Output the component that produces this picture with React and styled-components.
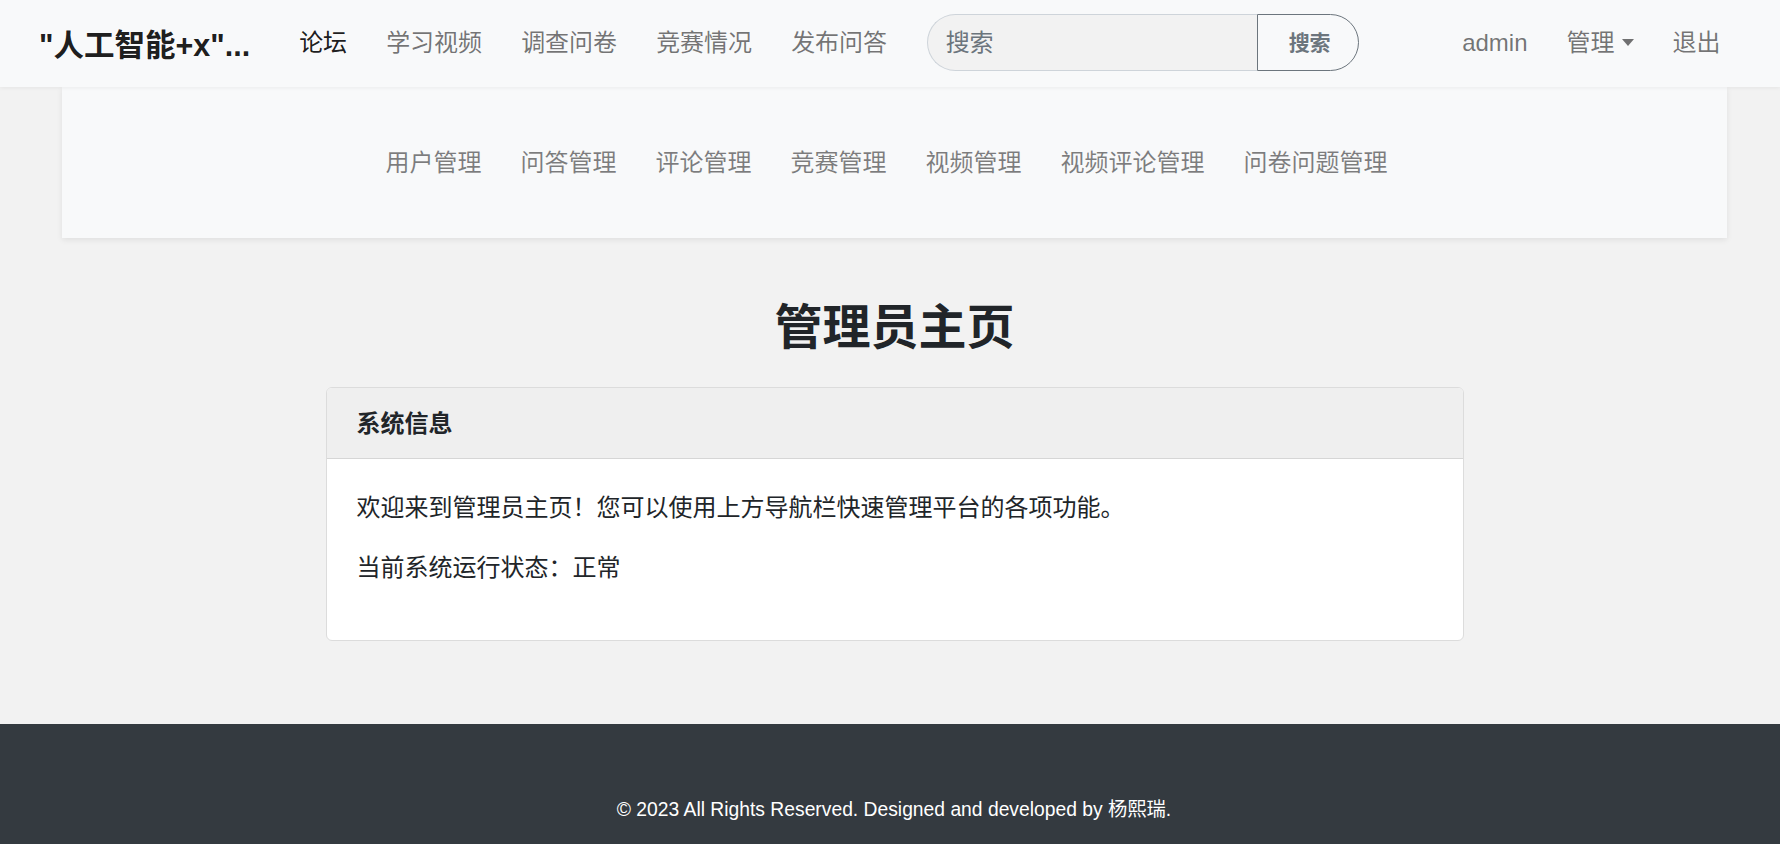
import React from "react";
import styled, { createGlobalStyle } from "styled-components";

const GlobalStyle = createGlobalStyle`
  html, body {
    margin: 0;
    padding: 0;
    background: #f2f2f2;
    font-family: "Noto Sans", "Noto Sans CJK SC", sans-serif;
    color: #212529;
  }
  * { box-sizing: border-box; }
`;

const Page = styled.div`
  min-height: 844px;
  display: flex;
  flex-direction: column;
`;

const NavBar = styled.nav`
  height: 87px;
  display: flex;
  align-items: center;
  padding: 0 40px 2px 39px;
  background: #f8f9fa;
  box-shadow: 0 1px 4px rgba(0, 0, 0, 0.06);
  position: relative;
  z-index: 2;
  font-family: "Liberation Sans", "Noto Sans CJK SC", sans-serif;
`;

const Brand = styled.a`
  font-size: 30.5px;
  font-weight: 700;
  color: rgba(0, 0, 0, 0.9);
  white-space: nowrap;
  margin-right: 29.5px;
`;

const NavList = styled.div`
  display: flex;
  align-items: center;
`;

const NavLink = styled.a`
  font-size: 24px;
  line-height: 36px;
  padding: 0 19.5px;
  color: ${(p) => (p.$active ? "rgba(0,0,0,0.9)" : "rgba(0,0,0,0.55)")};
  white-space: nowrap;
  display: flex;
  align-items: center;
`;

const Caret = styled.span`
  display: inline-block;
  margin-left: 7px;
  border-top: 7px solid rgba(0, 0, 0, 0.55);
  border-left: 6px solid transparent;
  border-right: 6px solid transparent;
`;

const SearchForm = styled.form`
  display: flex;
  height: 57px;
  margin: 0 0 0 20px;
`;

const SearchInput = styled.input`
  width: 330px;
  height: 100%;
  border: 1px solid #ced4da;
  border-right: none;
  border-radius: 29px 0 0 29px;
  background: #f2f2f2;
  padding: 1px 0 0 18px;
  font-family: inherit;
  font-size: 24px;
  color: #212529;
  outline: none;
  &::placeholder {
    color: #6c757d;
  }
`;

const SearchButton = styled.button`
  width: 102px;
  height: 100%;
  border: 1px solid #6c757d;
  border-radius: 0 29px 29px 0;
  background: transparent;
  color: #6c757d;
  font-family: inherit;
  font-size: 21px;
  font-weight: 700;
  padding: 0 0 4px 4px;
`;

const RightNav = styled(NavList)`
  margin-left: auto;
`;

const Main = styled.main`
  width: 1665px;
  margin-left: 62px;
  display: flex;
  flex-direction: column;
  align-items: center;
`;

const SubPanel = styled.div`
  align-self: stretch;
  height: 151px;
  background: #f8f9fa;
  box-shadow: 0 2px 6px rgba(0, 0, 0, 0.08);
  display: flex;
  align-items: center;
  justify-content: center;
  padding: 0 16px 4px 0;
`;

const SubLink = styled.a`
  font-size: 24px;
  padding: 0 19.5px;
  color: rgba(0, 0, 0, 0.5);
  white-space: nowrap;
`;

const Title = styled.h1`
  margin: 59px 0 32px;
  font-size: 48px;
  line-height: 58px;
  font-weight: 700;
  color: #212529;
`;

const Card = styled.section`
  width: 1138px;
  background: #fff;
  border: 1px solid #dcdcdc;
  border-radius: 6px;
  overflow: hidden;
`;

const CardHeader = styled.div`
  padding: 17px 30px;
  background: #efefef;
  border-bottom: 1px solid #d6d6d6;
  font-size: 24px;
  line-height: 36px;
  font-weight: 700;
`;

const CardBody = styled.div`
  padding: 30px 30px 31px;
`;

const Text = styled.p`
  margin: 0 0 24px;
  font-size: 24px;
  line-height: 36px;
  color: #212529;
`;

const Footer = styled.footer`
  margin-top: auto;
  height: 120px;
  background: #343a40;
  color: #fff;
  display: flex;
  justify-content: center;
  padding: 73px 0 0 8px;
  font-family: "Liberation Sans", "Noto Sans CJK SC", Arial, sans-serif;
  font-size: 19.3px;
  line-height: 26px;
`;

const Spacer = styled.div`
  height: 83px;
`;

const subLinks = ["用户管理", "问答管理", "评论管理", "竞赛管理", "视频管理", "视频评论管理", "问卷问题管理"];

export default function App() {
  return (
    <Page>
      <GlobalStyle />
      <NavBar>
        <Brand>"人工智能+x"...</Brand>
        <NavList>
          <NavLink $active>论坛</NavLink>
          <NavLink>学习视频</NavLink>
          <NavLink>调查问卷</NavLink>
          <NavLink>竞赛情况</NavLink>
          <NavLink>发布问答</NavLink>
        </NavList>
        <SearchForm onSubmit={(e) => e.preventDefault()}>
          <SearchInput placeholder="搜索" />
          <SearchButton type="submit">搜索</SearchButton>
        </SearchForm>
        <RightNav>
          <NavLink>admin</NavLink>
          <NavLink>
            管理
            <Caret />
          </NavLink>
          <NavLink>退出</NavLink>
        </RightNav>
      </NavBar>
      <Main>
        <SubPanel>
          {subLinks.map((l) => (
            <SubLink key={l}>{l}</SubLink>
          ))}
        </SubPanel>
        <Title>管理员主页</Title>
        <Card>
          <CardHeader>系统信息</CardHeader>
          <CardBody>
            <Text>欢迎来到管理员主页！您可以使用上方导航栏快速管理平台的各项功能。</Text>
            <Text>当前系统运行状态：正常</Text>
          </CardBody>
        </Card>
      </Main>
      <Spacer />
      <Footer>© 2023 All Rights Reserved. Designed and developed by 杨熙瑞.</Footer>
    </Page>
  );
}
